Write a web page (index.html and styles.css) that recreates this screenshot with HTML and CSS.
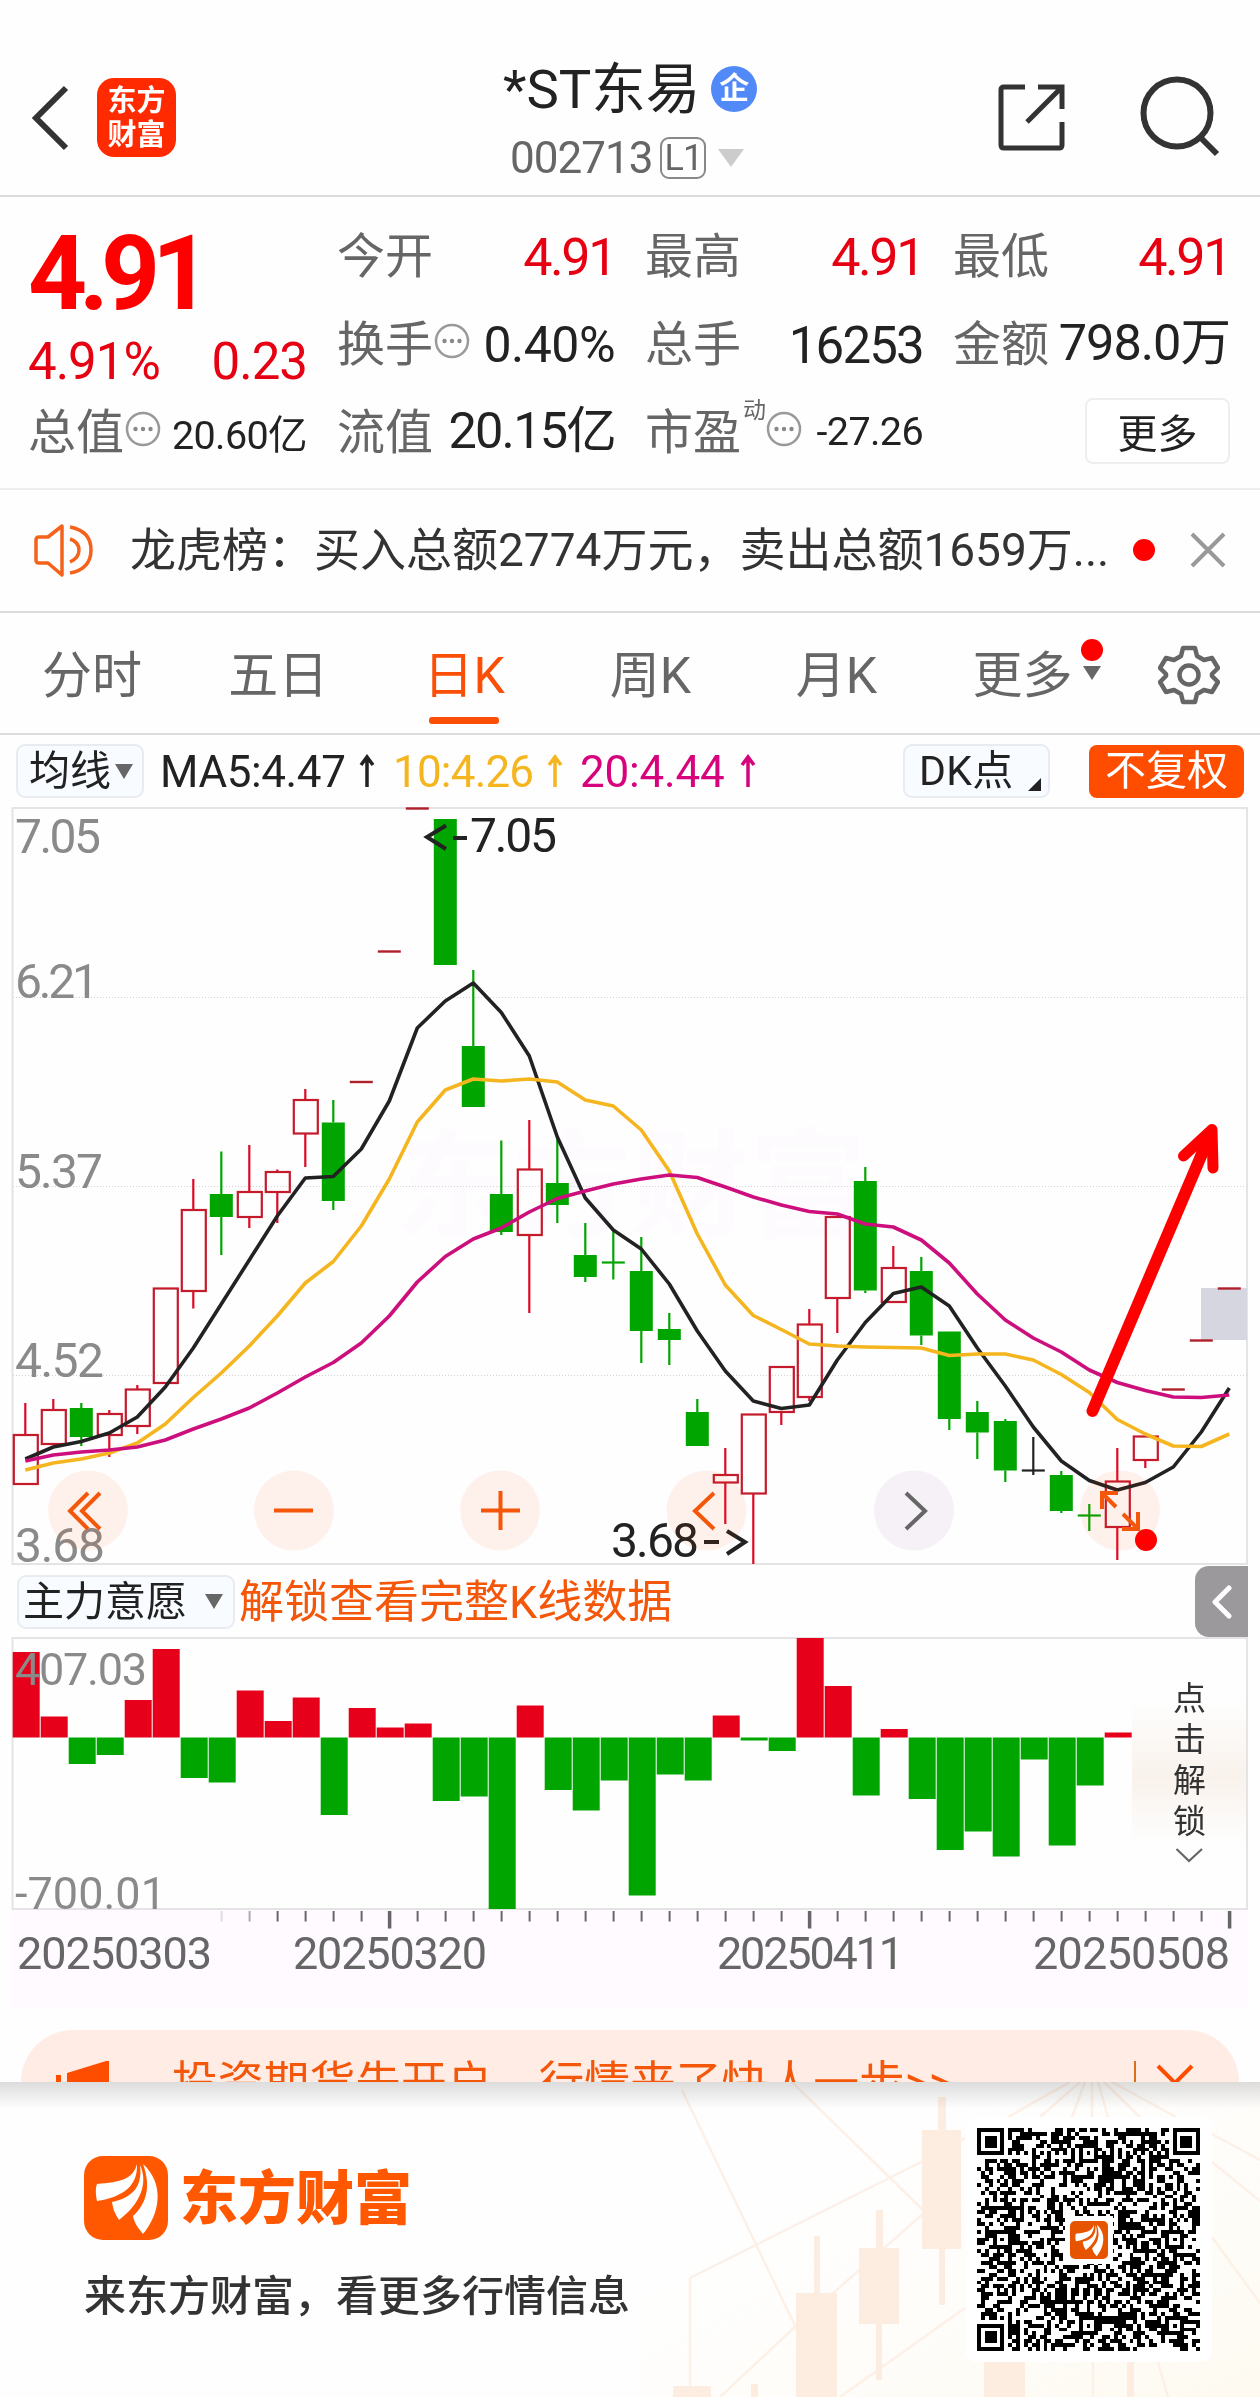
FILE: index.html
```html
<!DOCTYPE html>
<html lang="zh-CN">
<head>
<meta charset="utf-8">
<title>*ST东易 002713</title>
<link rel="stylesheet" href="styles.css">
</head>
<body>
<svg class="defs" width="0" height="0">
  <symbol id="dots" viewBox="0 0 36 36"><circle cx="18" cy="18" r="16" fill="none" stroke="#999" stroke-width="2.5"/><circle cx="10.500" cy="18" r="2.200" fill="#888"/><circle cx="18" cy="18" r="2.200" fill="#888"/><circle cx="25.500" cy="18" r="2.200" fill="#888"/></symbol>
  <symbol id="flame" viewBox="0 0 84 84"><path fill="#fff" d="M53 8C49 23 37 26 13 28C11 33 12 40 13 45C39 41 54 30 53 8Z"/><path fill="#fff" d="M56 9C59 33 46 42 28 46C29 54 32 59 35 64C55 49 65 28 56 9Z"/><path fill="#fff" d="M59 8C68 33 61 49 49 60C50 67 55 73 59 78C76 58 81 28 59 8Z"/></symbol>
</svg>

<header class="top">
  <svg class="back" width="40" height="66" viewBox="0 0 40 66"><path d="M34 3L4 33L34 63" fill="none" stroke="#333" stroke-width="6"/></svg>
  <div class="app-badge"><span>东方</span><span>财富</span></div>
  <div class="title">
    <div class="name">*ST东易<i class="ent">企</i></div>
    <div class="code"><span>002713</span><b>L1</b><svg width="26" height="18"><path d="M0 0H26L13 18Z" fill="#ccc"/></svg></div>
  </div>
  <svg class="share" width="68" height="68" viewBox="0 0 68 68" fill="none" stroke="#333" stroke-width="5"><path d="M27 3H6Q3 3 3 6V61Q3 64 6 64H61Q64 64 64 61V38M40 3H64V25M64 3L29 38"/></svg>
  <svg class="search" width="84" height="84" viewBox="0 0 84 84" fill="none" stroke="#333"><circle cx="38" cy="37" r="33.500" stroke-width="6"/><path d="M62 62L78 78" stroke-width="6"/></svg>
</header>

<section class="quote">
  <div class="price-box">
    <div class="price">4.91</div>
    <div class="change"><span>4.91%</span><span>0.23</span></div>
  </div>
  <div class="cell"><label>今开</label><span class="v up">4.91</span></div>
  <div class="cell"><label>最高</label><span class="v up">4.91</span></div>
  <div class="cell"><label>最低</label><span class="v up">4.91</span></div>
  <div class="cell"><label>换手</label><svg class="dots"><use href="#dots"/></svg><span class="v mid">0.40%</span></div>
  <div class="cell"><label>总手</label><span class="v tight">16253</span></div>
  <div class="cell"><label>金额</label><span class="v cjk">798.0万</span></div>
  <div class="cell"><label>总值</label><svg class="dots"><use href="#dots"/></svg><span class="v small">20.60亿</span></div>
  <div class="cell"><label>流值</label><span class="v cjk cap">20.15亿</span></div>
  <div class="cell"><label>市盈</label><sup>动</sup><svg class="dots"><use href="#dots"/></svg><span class="v small">-27.26</span></div>
  <div class="cell"><button class="more">更多</button></div>
</section>

<section class="notice">
  <svg width="62" height="64" viewBox="0 0 62 64" fill="none" stroke="#f4621b" stroke-width="3.500" stroke-linejoin="round"><path d="M28 8L14 19H5Q2 19 2 22V42Q2 45 5 45H14L28 57Z"/><path d="M36 21Q45 24 45 32Q45 40 36 44M36 9Q57 13 57 32Q57 51 36 55"/></svg>
  <p>龙虎榜：买入总额2774万元，卖出总额1659万...</p>
  <i class="dot"></i>
  <svg class="close" width="36" height="36" viewBox="0 0 36 36"><path d="M2 2L34 34M34 2L2 34" stroke="#999" stroke-width="4"/></svg>
</section>

<nav class="tabs">
  <a>分时</a><a>五日</a><a class="on">日K</a><a>周K</a><a>月K</a>
  <a class="tab-more">更多<i class="dot"></i><svg width="18" height="14"><path d="M0 0H18L9 14Z" fill="#666"/></svg></a>
  <svg class="gear" width="62" height="62" viewBox="0 0 62 62" fill="none" stroke="#666" stroke-width="4.500" stroke-linejoin="round"><path d="M25 4H37L39 12L46 16L54 14L60 24L54 30V32L60 38L54 48L46 46L39 50L37 58H25L23 50L16 46L8 48L2 38L8 32V30L2 24L8 14L16 16L23 12Z"/><circle cx="31" cy="31" r="9.500"/></svg>
</nav>

<div class="ma-bar">
  <div class="pill ma-pill">均线<svg width="18" height="15"><path d="M0 0H18L9 15Z" fill="#666"/></svg></div>
  <span class="ma ma5">MA5:4.47</span><svg class="arr" viewBox="0 0 16 34" stroke="#222"><path d="M8 33V3M2 11L8 3L14 11"/></svg>
  <span class="ma ma10">10:4.26</span><svg class="arr" viewBox="0 0 16 34" stroke="#f5b51e"><path d="M8 33V3M2 11L8 3L14 11"/></svg>
  <span class="ma ma20">20:4.44</span><svg class="arr" viewBox="0 0 16 34" stroke="#d6037c"><path d="M8 33V3M2 11L8 3L14 11"/></svg>
  <div class="pill dk">DK点<svg width="13" height="13"><path d="M13 0V13H0Z" fill="#222"/></svg></div>
  <div class="fq">不复权</div>
</div>

<svg id="kline" class="kline" viewBox="0 807 1260 759"></svg>

<div class="ind-bar">
  <div class="pill ind-pill">主力意愿<svg width="18" height="15"><path d="M0 0H18L9 15Z" fill="#666"/></svg></div>
  <span class="unlock">解锁查看完整K线数据</span>
  <div class="handle"><svg width="20" height="34" viewBox="0 0 20 34"><path d="M17 3L3 17L17 31" fill="none" stroke="#fff" stroke-width="5" stroke-linecap="round" stroke-linejoin="round"/></svg></div>
</div>

<svg id="force" class="force" viewBox="0 1637 1260 371"></svg>

<div class="ad-clip">
  <div class="ad">
    <svg class="horn" width="56" height="48" viewBox="0 0 56 48"><path d="M0 14H5V48H0ZM11 12L50 0H53V48H11Z" fill="#ff4d00"/></svg>
    <p>投资期货先开户，行情来了快人一步&gt;&gt;</p>
    <i class="bar"></i>
    <svg width="38" height="38" viewBox="0 0 38 38"><path d="M2 2L36 36M36 2L2 36" stroke="#ff4d00" stroke-width="4"/></svg>
  </div>
</div>

<footer class="foot">
  <svg class="foot-bg" viewBox="640 2082 620 315" width="620" height="315">
    <defs><linearGradient id="warm" x1="0" y1="0" x2="1" y2="1"><stop offset=".3" stop-color="#fffdf6" stop-opacity="0"/><stop offset="1" stop-color="#fffbf2"/></linearGradient></defs>
    <path d="M640 2082H1260V2397H640Z" fill="url(#warm)"/>
    <g stroke="#fef1e8" stroke-width="2.500" fill="none">
      <path d="M792 2082L925 2212M682 2090L797 2330M690 2278L925 2160L965 2138M720 2397L797 2325L925 2212M840 2397L965 2308M690 2278V2397"/>
      <path d="M1070 2082L1008 2117M1080 2082L1040 2117M1085 2082L1072 2117M1092 2082V2117M1098 2082L1108 2117M1104 2082L1140 2117M1112 2082L1176 2117M1212 2134L1260 2160M1212 2162L1260 2201M1212 2237L1260 2303M1093 2362V2397M1158 2362L1168 2397"/>
    </g>
    <g fill="#feeee2">
      <path d="M938 2097H946V2130H961V2249H945V2305H939V2249H922V2130H938ZM876 2210H883V2248H899V2324H882V2380H876V2324H859V2248H876ZM814 2236H820V2293H837V2397H796V2293H814ZM984 2362H1025V2397H984ZM751 2384H758V2397H751ZM673 2386H711V2397H673ZM1127 2362H1134V2397H1127Z"/>
    </g>
  </svg>
  <div class="brand">
    <div class="logo-row"><svg class="logo" width="84" height="84"><use href="#flame"/></svg><span>东方财富</span></div>
    <p>来东方财富，看更多行情信息</p>
  </div>
  <div class="qr"><svg id="qr" width="223" height="223" viewBox="0 0 57 57" shape-rendering="crispEdges"></svg>
    <div class="qr-logo"><svg width="38" height="38"><use href="#flame"/></svg></div>
  </div>
</footer>
<script src="chart.js"></script>
</body>
</html>
```
FILE: styles.css
```css
* { box-sizing: border-box; margin: 0; padding: 0; }
body { width: 1260px; height: 2397px; overflow: hidden; background: #fefefe; color: #222; font-family: Roboto, "Noto Sans CJK SC", sans-serif; display: flex; flex-direction: column; }
svg { display: block; flex: none; }
i { font-style: normal; }
.defs { position: absolute; }
.dot { width: 22px; height: 22px; border-radius: 50%; background: #f00; flex: none; }

.top { height: 197px; flex: none; border-bottom: 2px solid #dcdcdc; padding: 40px 32px 0; display: flex; align-items: center; }
.back { margin-right: 25px; }
.app-badge { width: 79px; height: 79px; border-radius: 17px; background: #ff2a00; color: #fff; font-weight: 700; font-size: 29px; line-height: 34px; display: flex; flex-direction: column; align-items: center; justify-content: center; }
.title { width: 260px; margin-left: 324px; display: flex; flex-direction: column; padding-top: 9px; height: 156px; }
.name { display: flex; align-items: center; font-size: 54.500px; line-height: 82px; height: 80px; white-space: nowrap; margin-left: 3px; }
.ent { width: 46px; height: 46px; border-radius: 50%; background: #5189f8; color: #fff; font-size: 30px; line-height: 43px; font-weight: 700; text-align: center; margin-left: 11px; }
.code { display: flex; align-items: center; height: 56px; font-size: 44px; color: #666; margin: 1px 0 0 10px; }
.code span { letter-spacing: -1px; }
.code b { font-weight: 400; font-size: 36px; line-height: 38px; width: 46px; height: 42px; border: 2px solid #888; border-radius: 9px; text-align: center; letter-spacing: -1px; margin: 0 12px 0 8px; }
.share { margin-left: 238px; }
.search { margin-left: 73px; margin-right: -20px; }

.quote { height: 293px; flex: none; border-bottom: 2px solid #eee; padding: 16px 29px 0 28px; display: grid; grid-template-columns: 279px 278px 278px 277px; grid-template-rows: 88px 88px 88px; column-gap: 30px; }
.price-box { grid-row: 1 / 3; color: #f00; display: flex; flex-direction: column; }
.price { font-size: 103px; font-weight: 700; letter-spacing: -8px; line-height: 122px; height: 120px; }
.change { display: flex; justify-content: space-between; font-size: 51px; line-height: 58px; color: #e60012; letter-spacing: -1px; }
.cell { display: flex; align-items: center; }
.cell label { font-size: 48px; color: #666; line-height: 60px; }
.v { margin-left: auto; font-size: 51px; letter-spacing: -1px; white-space: nowrap; }
.v.cjk { line-height: 60px; margin-top: -5px; font-size: 50.500px; }
.v.cap { letter-spacing: -1.800px; }
.v.up { color: #e60012; font-size: 52px; letter-spacing: -2.400px; margin-top: 1px; }
.v.tight { letter-spacing: -1.800px; }
.v.mid { font-size: 50px; letter-spacing: -.5px; }
.v.small { font-size: 39.500px; letter-spacing: -.6px; margin-top: -3px; }
.dots { width: 36px; height: 36px; margin-top: -8px; margin-left: 1px; }
.cell sup { font-size: 23px; color: #666; align-self: flex-start; margin: 7px 0 0 2px; width: 23px; line-height: 30px; }
.cell sup + .dots { margin-left: 0; }
.more { margin-left: auto; width: 145px; height: 66px; margin-top: -4px; border: 2px solid #eee; border-radius: 8px; background: #fff; font: 40px/56px "Noto Sans CJK SC", sans-serif; color: #222; }

.notice { height: 123px; flex: none; border-bottom: 2px solid #dcdcdc; padding: 0 34px 2px 34px; display: flex; align-items: center; }
.notice p { font-size: 46px; margin-left: 34px; margin-top: -7px; white-space: nowrap; width: 1003px; color: #333; }
.notice .close { margin-left: auto; }

.tabs { height: 122px; flex: none; border-bottom: 2px solid #dcdcdc; display: grid; grid-template-columns: repeat(6, 186.100px) 143.400px; align-items: stretch; }
.tabs a { position: relative; font-size: 50px; line-height: 126px; color: #666; text-align: center; right: 1px; }
.tabs a.on { color: #fb4e06; }
.tabs a.on::after { content: ""; position: absolute; left: 58px; top: 104px; width: 70px; height: 7px; border-radius: 3px; background: #fb4e06; }
.tab-more .dot { position: absolute; left: 152px; top: 26px; }
.tab-more svg { position: absolute; left: 154px; top: 53px; }
.gear { align-self: center; margin-left: 41px; margin-top: -3px; }

.ma-bar { height: 72px; flex: none; padding: 0 16px; display: flex; align-items: center; font-size: 44px; }
.pill { height: 54px; border: 2px solid #e8ebf0; border-radius: 9px; background: #f8fbff; font-size: 41px; line-height: 48px; display: flex; align-items: center; white-space: nowrap; }
.ma-pill { width: 128px; padding-left: 11px; gap: 4px; }
.ma { white-space: nowrap; flex: none; padding-top: 2px; }
.ma5 { margin-left: 16px; width: 192px; letter-spacing: -.4px; }
.ma10 { margin-left: 18px; width: 147px; color: #f5b51e; letter-spacing: -.8px; }
.ma20 { margin-left: 17px; width: 153px; color: #d6037c; letter-spacing: -.2px; }
.arr { width: 16px; height: 34px; fill: none; stroke-width: 3.500px; }
.ma-bar .arr { margin-left: 7px; }
.dk { width: 147px; margin-left: auto; padding-left: 14px; letter-spacing: .3px; }
.dk svg { margin: 26px 0 0 14px; }
.fq { width: 155px; height: 53px; margin-left: 39px; margin-right: 0; border-radius: 8px; background: #ff4d00; color: #fff; font-size: 41px; line-height: 52px; text-align: center; }

.kline { width: 1260px; height: 759px; }
.ind-bar { height: 71px; flex: none; display: flex; align-items: center; padding-left: 17px; }
.ind-pill { width: 218px; padding-left: 4px; gap: 18px; line-height: 50px; }
.unlock { font-size: 45px; color: #f4560a; margin-left: 4px; line-height: 60px; padding-top: 2px; }
.handle { width: 53px; height: 71px; margin-left: auto; margin-right: 12px; background: #9c999c; border-radius: 14px 0 0 14px; display: flex; align-items: center; justify-content: center; }
.force { width: 1260px; height: 371px; }

.ad-clip { height: 74px; flex: none; padding: 22px 21px 0; overflow: hidden; }
.ad { height: 105px; border-radius: 52px; background: #ffede5; color: #f4560a; display: flex; align-items: center; padding: 0 45px 0 35px; }
.horn { margin-top: 4px; }
.ad p { font-size: 45.800px; margin-left: 60px; margin-top: -7px; white-space: nowrap; }
.bar { width: 2px; height: 44px; background: #d9701d; margin-left: auto; margin-right: 20px; }

.foot { position: relative; height: 315px; flex: none; background: linear-gradient(#dcdcdc 0, #e9e9e9 10px, #f8f8f8 22px, #fefefe 27px); display: flex; justify-content: space-between; padding: 0 60px 0 84px; }
.foot-bg { position: absolute; right: 0; top: 0; mix-blend-mode: multiply; }
.brand { position: relative; padding-top: 74px; }
.logo-row { display: flex; align-items: center; height: 84px; gap: 12px; font-size: 58px; font-weight: 900; color: #ff5800; }
.logo-row span { margin-top: -8px; }
.logo { background: #ff5800; border-radius: 19px; }
.brand p { font-size: 42px; font-weight: 500; line-height: 60px; margin-top: 23px; color: #333; font-family: "Noto Sans CJK SC", sans-serif; }
.qr { position: relative; align-self: flex-start; margin: 35px -12px 0 0; padding: 11px 12px 11px 11px; background: #fff; border-radius: 10px; }
.qr-logo { position: absolute; left: 99px; top: 99px; width: 48px; height: 48px; background: #fff; display: flex; align-items: center; justify-content: center; }
.qr-logo svg { background: #e65400; border-radius: 5px; }
svg text { font-family: Roboto, "Noto Sans CJK SC", sans-serif; }
```
FILE: chart.js
```js
const X0 = 25.3, STEP = 28;
const RED = '#dc0a26', GREEN = '#00a500', BLACK = '#222';
const cx = i => X0 + STEP * i;
const line = (x1, y1, x2, y2, c, w) => `<path d="M${x1} ${y1}L${x2} ${y2}" stroke="${c}" stroke-width="${w}" fill="none"/>`;
const label = (x, y, w, s, t, c) => `<text x="${x}" y="${y}" font-size="${s}" textLength="${w}" fill="${c}">${t}</text>`;

// kind, high, body top, body bottom, low
const candles = [
  ['r',1403,1435,1484,1484],['r',1399,1410,1444,1444],['g',1403,1408,1437,1446],['r',1410,1414,1435,1457],
  ['r',1385,1389.5,1426,1434],['r',1288,1288.5,1383,1383],['r',1179,1210,1291,1308.5],['g',1151.5,1194,1217,1255],
  ['r',1145,1192,1217,1228],['r',1169.5,1172,1192,1223],['r',1089,1100,1133.5,1167],['g',1100,1122.5,1201,1210],
  ['d',1082],['d',951.5],['d',808.5],['g',819,819,965,965],['g',970,1046,1107,1107],['g',1140.5,1194,1232,1235],
  ['r',1120,1169.5,1235,1313],['g',1137,1183,1205,1223],['g',1223,1255,1277,1282],['x',1230,1262.5,1262.5,1279.5],
  ['g',1237,1271,1331,1363],['g',1313,1329,1340,1365],['g',1399,1412,1446,1446],['r',1448,1475,1482.5,1524],
  ['r',1414,1414.5,1493.5,1564],['r',1367,1367,1412,1425],['r',1309,1324.5,1397,1401],['r',1216,1217,1298,1333],
  ['g',1167,1181,1290.5,1293],['r',1246,1268,1302,1302],['g',1257,1271,1335.5,1345],['g',1331.5,1331.5,1419,1430],
  ['g',1401,1412,1432.5,1459],['g',1419,1421,1470.5,1482],['k',1437,1470.5,1470.5,1475],['g',1471,1475,1511,1513],
  ['x',1504,1515.5,1515.5,1531],['r',1448,1481.5,1527,1560],['r',1436.5,1436.5,1460,1468],['d',1389.5],['d',1340.5],['d',1288.5]
];
const ma5 = [1459,1447,1441.5,1433,1417,1387,1348,1304,1260,1216,1178,1176.5,1149,1101,1028,1001,983,1012.5,1056,1137,1198,1230,1249,1284,1331,1371,1401,1408.5,1405,1360,1322.5,1293.5,1287,1306,1348,1386,1427,1461,1480.5,1490,1482.5,1467,1432,1388];
const ma10 = [1470,1463,1459,1453,1443,1424,1397.5,1373,1346,1316,1283,1261.5,1226,1179,1122,1090,1079,1081,1079,1082,1100,1106,1130,1171,1234,1285,1315.5,1329.5,1344,1346,1347,1347.5,1348,1355.5,1354,1354,1360,1374.5,1392.5,1419.5,1434,1446,1446.5,1434];
const ma20 = [1461,1455,1452,1450,1447,1440,1429,1419,1408,1393,1377,1362.5,1343,1316,1282,1256.5,1239,1228,1212,1198.5,1191,1184,1179,1175,1177.5,1187,1197,1205,1211.5,1214,1224,1227,1240,1263,1294,1320,1338,1352,1370,1382.5,1390.5,1397,1397.5,1395];
const poly = (a, c) => `<polyline points="${a.map((y, i) => cx(i) + ',' + y).join(' ')}" fill="none" stroke="${c}" stroke-width="3.600" stroke-linejoin="round"/>`;

let k = `<rect x="12.500" y="808" width="1234.500" height="756" fill="none" stroke="#e4e4e4" stroke-width="2"/>`;
k += `<text x="395" y="1228" font-size="118" font-weight="700" fill="#fefbfe">东方财富</text>`;
[997.5, 1186.5, 1375.5].forEach(y => k += `<path d="M13 ${y}H1247" stroke="#d4d4d4" stroke-width="1" stroke-dasharray="1 2"/>`);
k += `<rect x="1201" y="1288" width="46" height="52" fill="#d5d6df"/>`;
k += label(15, 853, 86, 48, '7.05', '#8a8a8a') + label(15, 998, 84, 48, '6.21', '#8a8a8a') + label(15, 1188, 88, 48, '5.37', '#8a8a8a') + label(15, 1377, 89, 48, '4.52', '#8a8a8a') + label(15, 1562, 90, 48, '3.68', '#8a8a8a');
candles.forEach(([t, h, a, b, l], i) => {
  const x = cx(i), c = t === 'r' ? RED : t === 'k' ? BLACK : GREEN;
  if (t === 'd') { k += line(x - 11.5, h, x + 11.5, h, '#b0202c', 2.4); return; }
  if (h < a) k += line(x, h, x, a, c, 2.2);
  if (l > b) k += line(x, b, x, l, c, 2.2);
  if (t === 'r') k += `<rect x="${x - 11.5}" y="${a}" width="24" height="${b - a}" fill="none" stroke="#c41a2c" stroke-width="2.200"/>`;
  else if (t === 'g') k += `<rect x="${x - 11.5}" y="${a}" width="23" height="${b - a}" fill="${c}"/>`;
  else k += line(x - 11.5, a, x + 11.5, a, c, 2.2);
});
k += poly(ma5, '#222') + poly(ma10, '#f5b51e') + poly(ma20, '#cc0f7c');
k += label(470, 852, 87, 48, '7.05', BLACK) + `<path d="M446 825.500L427 837L446 849M453 838H467" fill="none" stroke="#222" stroke-width="4"/>`;
k += label(611, 1557, 88, 48, '3.68', BLACK) + `<path d="M704 1542H719M727 1531L745 1542L727 1554" fill="none" stroke="#222" stroke-width="4"/>`;
[88, 294, 500, 706.5, 914, 1120].forEach((x, i) => k += `<circle cx="${x}" cy="1510.500" r="40" fill="${i === 4 ? '#ebe4ee' : '#ff4d00'}" fill-opacity="${i === 4 ? .5 : .07}"/>`);
k += `<path d="M88 1493L70 1511L88 1529M100 1493L82 1511L100 1529M274 1510.500H313M481 1510.500H520M500.500 1491V1530M714 1493L695 1511L714 1529" fill="none" stroke="#f4560a" stroke-width="4"/>`;
k += `<path d="M906 1493L925 1511L906 1529" fill="none" stroke="#666" stroke-width="4"/>`;
k += `<path d="M1102 1509V1493H1118M1102 1493L1116 1507M1122 1529H1138V1512M1138 1529L1123 1514" fill="none" stroke="#f4560a" stroke-width="4"/>`;
k += `<circle cx="1146" cy="1540" r="11" fill="#f00"/>`;
k += `<path d="M1092.500 1411L1207 1142" fill="none" stroke="#f00" stroke-width="12" stroke-linecap="round"/><path d="M1183.500 1156L1212 1129.500L1213 1168M1211 1131L1200 1158" fill="none" stroke="#f00" stroke-width="11" stroke-linecap="round" stroke-linejoin="round"/>`;
document.getElementById('kline').innerHTML = k;

// bar ends of the main-force histogram; the zero line is ZERO
const ZERO = 1737.5;
const bars = [1652,1716.5,1764,1755,1700,1649,1778,1782.5,1690.5,1721,1697.5,1815,1708,1727.5,1723.5,1801,1796.5,1909,1705.5,1790,1810.5,1780.5,1895.5,1774.5,1780.5,1715.5,1740.5,1751,1638,1686,1795.5,1729,1799,1850,1831.5,1856.5,1759.5,1845.5,1785.5,1732.5];
let f = `<defs><linearGradient id="haze" x1="0" y1="0" x2="0" y2="1"><stop offset="0" stop-color="#f9f2ec" stop-opacity="0"/><stop offset=".55" stop-color="#f9f2ec"/><stop offset="1" stop-color="#f9f2ec" stop-opacity="0"/></linearGradient></defs>`;
f += `<rect x="12" y="1910" width="1236" height="98" fill="#fefaff"/><rect x="12.500" y="1638" width="1234.500" height="271" fill="none" stroke="#e4e4e4" stroke-width="2"/>`;
f += `<rect x="1132" y="1700" width="114" height="142" fill="url(#haze)"/>`;
bars.forEach((y, i) => f += `<rect x="${12.7 + STEP * i}" y="${Math.min(y, ZERO)}" width="27" height="${Math.abs(y - ZERO)}" fill="${y < ZERO ? '#e60019' : GREEN}"/>`);
for (let i = 7; i < 44; i++) {
  const big = i === 13 || i === 28 || i === 43;
  f += line(cx(i) + .3, 1911, cx(i) + .3, big ? 1928.5 : 1921.5, i === 7 ? '#ddd' : i === 8 ? '#aaa' : '#666', big ? 3.5 : 2);
}
f += label(15, 1685, 132, 45, '407.03', '#8a8a8a') + label(15, 1909, 151, 45, '-700.01', '#8a8a8a');
f += label(17, 1969, 195, 45, '20250303', '#666') + label(293, 1969, 194, 45, '20250320', '#666') + label(717, 1969, 187, 45, '20250411', '#666') + label(1033, 1969, 197, 45, '20250508', '#666');
['点', '击', '解', '锁'].forEach((t, i) => f += `<text x="1173" y="${1710 + 41 * i}" font-size="33" fill="#333">${t}</text>`);
f += `<path d="M1176.500 1849L1189 1861L1202 1849" fill="none" stroke="#666" stroke-width="2.200"/>`;
document.getElementById('force').innerHTML = f;

// 57-module code: finders, alignment marks and a seeded data area
const N = 57, m = Array.from({ length: N }, () => Array(N).fill(0));
let seed = 2713;
const rnd = () => (seed = (seed * 1103515245 + 12345) % 2147483648) / 2147483648;
for (let y = 0; y < N; y++) for (let x = 0; x < N; x++) m[y][x] = rnd() < .5 ? 1 : 0;
for (let i = 8; i < 49; i++) m[6][i] = m[i][6] = 1 - i % 2;
[[28, 6], [6, 28], [50, 28], [28, 50], [50, 50]].forEach(([ax, ay]) => {
  for (let y = -2; y <= 2; y++) for (let x = -2; x <= 2; x++) m[ay + y][ax + x] = Math.max(Math.abs(x), Math.abs(y)) === 1 ? 0 : 1;
});
[[3, 3], [53, 3], [3, 53]].forEach(([fx, fy]) => {
  for (let y = -4; y <= 4; y++) for (let x = -4; x <= 4; x++) {
    const d = Math.max(Math.abs(x), Math.abs(y));
    if (m[fy + y] && fx + x >= 0 && fx + x < N) m[fy + y][fx + x] = d === 4 || d === 2 ? 0 : 1;
  }
});
let q = '';
m.forEach((r, y) => r.forEach((v, x) => { if (v) q += `M${x} ${y}h1v1h-1z`; }));
document.getElementById('qr').innerHTML = `<path d="${q}"/>`;
```
